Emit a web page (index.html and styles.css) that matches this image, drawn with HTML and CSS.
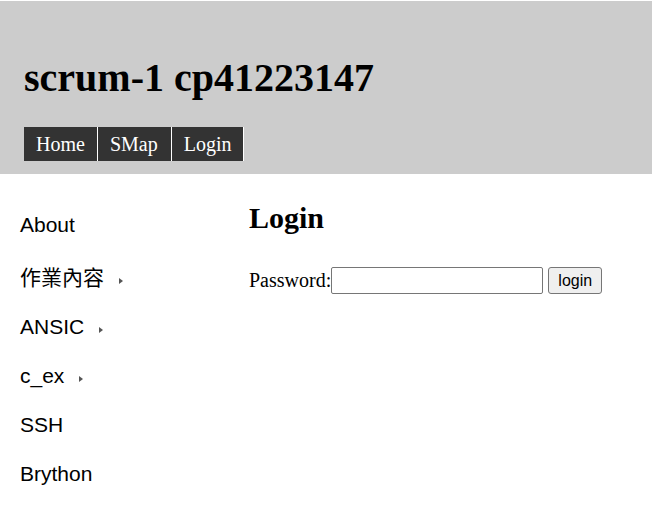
FILE: index.html
```html
<!DOCTYPE html>
<html>
<head>
<meta charset="utf-8">
<link rel="stylesheet" href="styles.css">
</head>
<body>
<header class="header">
  <h1 class="title">scrum-1 cp41223147</h1>
  <nav class="nav">
    <a class="nav-item" href="#">Home</a>
    <a class="nav-item" href="#">SMap</a>
    <a class="nav-item" href="#">Login</a>
  </nav>
</header>
<div class="layout">
  <ul class="sidebar">
    <li class="side-item">About</li>
    <li class="side-item has-sub cjk">作業內容</li>
    <li class="side-item has-sub">ANSIC</li>
    <li class="side-item has-sub">c_ex</li>
    <li class="side-item">SSH</li>
    <li class="side-item">Brython</li>
  </ul>
  <main class="main">
    <h2 class="heading">Login</h2>
    <form class="login-form">
      <label class="label">Password:</label><input class="pw" type="password"><button class="btn" type="button">login</button>
    </form>
  </main>
</div>
</body>
</html>
```
FILE: styles.css
```css
html, body {
  margin: 0;
  padding: 0;
  background: #fff;
}
body {
  font-family: "Liberation Serif", "Times New Roman", serif;
  font-size: 20px;
  color: #000;
}
.header {
  margin: 1px 1px 0 0;
  background: #ccc;
  padding: 54px 24px 13px;
}
.title {
  margin: 0 0 26px;
  font-size: 40px;
  font-weight: bold;
  line-height: 46px;
}
.nav {
  display: flex;
}
.nav-item {
  display: block;
  background: #333;
  color: #fff;
  text-decoration: none;
  padding: 0 12px;
  line-height: 34px;
  height: 34px;
  border-right: 1px solid #fff;
}
.nav-item:nth-child(2) {
  padding: 0 13px 0 12px;
}
.layout {
  display: flex;
}
.sidebar {
  list-style: none;
  margin: 0;
  padding: 26px 0 0 20px;
  width: 249px;
  box-sizing: border-box;
  font-family: "Liberation Sans", Arial, "Noto Sans CJK TC", sans-serif;
  font-size: 21px;
}
.side-item {
  height: 49px;
  line-height: 49px;
  display: flex;
  align-items: center;
  color: #000;
}
.side-item.cjk {
  box-sizing: border-box;
  height: 53px;
  padding-top: 4px;
}
.has-sub::after {
  content: "";
  display: inline-block;
  margin-left: 15px;
  margin-top: 6px;
  width: 0;
  height: 0;
  border-top: 3px solid transparent;
  border-bottom: 3px solid transparent;
  border-left: 4px solid #555;
}
.main {
  flex: 1;
}
.heading {
  margin: 27px 0 0;
  font-size: 30px;
  line-height: 34px;
  font-weight: bold;
}
.login-form {
  margin-top: 32px;
  display: flex;
  align-items: center;
}
.label {
  font-size: 20px;
}
.pw {
  box-sizing: border-box;
  width: 212px;
  height: 27px;
  margin: 0;
  border: 1px solid #767676;
  border-radius: 2px;
  padding: 1px 2px;
}
.btn {
  box-sizing: border-box;
  margin: 0 0 0 5px;
  width: 54px;
  height: 27px;
  font-family: "Liberation Sans", Arial, sans-serif;
  font-size: 16px;
  padding: 0 6px;
  background: #efefef;
  border: 1px solid #767676;
  border-radius: 3px;
  color: #000;
}
```
